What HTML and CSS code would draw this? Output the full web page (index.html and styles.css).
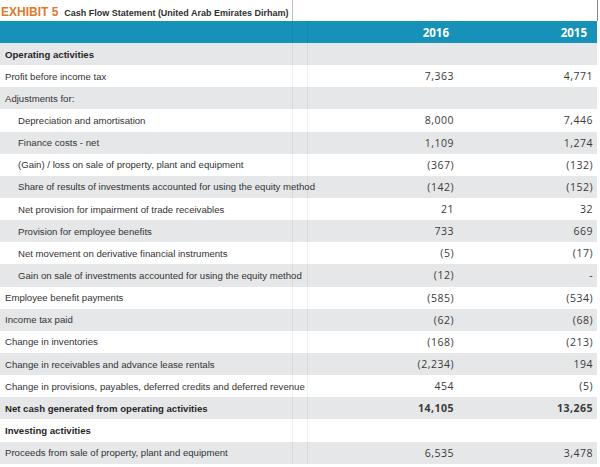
FILE: index.html
```html
<!DOCTYPE html>
<html>
<head>
<meta charset="utf-8">
<link rel="stylesheet" href="styles.css">
</head>
<body>
<table class="cf">
  <colgroup>
    <col class="c-label"><col class="c-gap"><col class="c-y1"><col class="c-y2">
  </colgroup>
  <thead>
    <tr class="title-row">
      <td class="title-cell"><span class="exhibit">EXHIBIT 5</span><span class="title">Cash Flow Statement (United Arab Emirates Dirham)</span></td>
      <td class="title-rest" colspan="3"></td>
    </tr>
    <tr class="head-row">
      <th class="lbl"></th><th class="gap"></th><th class="yr">2016</th><th class="yr">2015</th>
    </tr>
  </thead>
  <tbody>
    <tr class="alt bold"><td class="lbl">Operating activities</td><td class="gap"></td><td class="num"></td><td class="num"></td></tr>
    <tr><td class="lbl">Profit before income tax</td><td class="gap"></td><td class="num">7,363</td><td class="num">4,771</td></tr>
    <tr class="alt"><td class="lbl">Adjustments for:</td><td class="gap"></td><td class="num"></td><td class="num"></td></tr>
    <tr><td class="lbl ind">Depreciation and amortisation</td><td class="gap"></td><td class="num">8,000</td><td class="num">7,446</td></tr>
    <tr class="alt"><td class="lbl ind">Finance costs - net</td><td class="gap"></td><td class="num">1,109</td><td class="num">1,274</td></tr>
    <tr><td class="lbl ind">(Gain) / loss on sale of property, plant and equipment</td><td class="gap"></td><td class="num">(367)</td><td class="num">(132)</td></tr>
    <tr class="alt"><td class="lbl ind">Share of results of investments accounted for using the equity method</td><td class="gap"></td><td class="num">(142)</td><td class="num">(152)</td></tr>
    <tr><td class="lbl ind">Net provision for impairment of trade receivables</td><td class="gap"></td><td class="num">21</td><td class="num">32</td></tr>
    <tr class="alt"><td class="lbl ind">Provision for employee benefits</td><td class="gap"></td><td class="num">733</td><td class="num">669</td></tr>
    <tr><td class="lbl ind">Net movement on derivative financial instruments</td><td class="gap"></td><td class="num">(5)</td><td class="num">(17)</td></tr>
    <tr class="alt"><td class="lbl ind">Gain on sale of investments accounted for using the equity method</td><td class="gap"></td><td class="num">(12)</td><td class="num">-</td></tr>
    <tr><td class="lbl">Employee benefit payments</td><td class="gap"></td><td class="num">(585)</td><td class="num">(534)</td></tr>
    <tr class="alt"><td class="lbl">Income tax paid</td><td class="gap"></td><td class="num">(62)</td><td class="num">(68)</td></tr>
    <tr><td class="lbl">Change in inventories</td><td class="gap"></td><td class="num">(168)</td><td class="num">(213)</td></tr>
    <tr class="alt"><td class="lbl">Change in receivables and advance lease rentals</td><td class="gap"></td><td class="num">(2,234)</td><td class="num">194</td></tr>
    <tr><td class="lbl">Change in provisions, payables, deferred credits and deferred revenue</td><td class="gap"></td><td class="num">454</td><td class="num">(5)</td></tr>
    <tr class="alt bold"><td class="lbl">Net cash generated from operating activities</td><td class="gap"></td><td class="num">14,105</td><td class="num">13,265</td></tr>
    <tr class="bold"><td class="lbl">Investing activities</td><td class="gap"></td><td class="num"></td><td class="num"></td></tr>
    <tr class="alt"><td class="lbl">Proceeds from sale of property, plant and equipment</td><td class="gap"></td><td class="num">6,535</td><td class="num">3,478</td></tr>
  </tbody>
</table>
</body>
</html>
```

FILE: styles.css
```css
html, body {
  margin: 0;
  padding: 0;
  background: #ffffff;
}

.cf {
  border-collapse: collapse;
  table-layout: fixed;
  width: 597px;
  font-family: "Liberation Sans", Arial, sans-serif;
  color: #333333;
}

.c-label { width: 292px; }
.c-gap { width: 15px; }
.c-y1 { width: 150px; }
.c-y2 { width: 140px; }

.cf td, .cf th {
  padding: 0;
  white-space: nowrap;
  overflow: visible;
}

.title-row td {
  height: 21px;
  vertical-align: middle;
}

.title-cell {
  border-right: 1px solid #bfbfbf;
  padding-left: 1px !important;
}

.title-rest {
  border-right: 1px solid #8a8a8a;
}

.exhibit {
  font-weight: bold;
  font-size: 12px;
  color: #e0782d;
  margin-right: 6px;
}

.title {
  font-weight: bold;
  font-size: 9px;
  color: #2f2f2f;
}

.head-row th {
  height: 22px;
  background: #1691b7;
  color: #ffffff;
  font-family: "Open Sans", sans-serif;
  font-weight: bold;
  font-size: 11.5px;
}

.head-row th.yr {
  text-align: right;
  color: #ffffff;
}

.head-row th.yr:nth-child(3) { padding-right: 8px; }
.head-row th.yr:nth-child(4) { padding-right: 10px; }

.cf tbody td {
  height: 22.15px;
  vertical-align: middle;
  font-size: 9.6px;
}

.cf tbody tr.alt td {
  background: #e6e7e8;
}

.lbl {
  text-align: left;
  padding-left: 5px !important;
  border-right: 1px solid rgba(0, 0, 0, 0.06);
}

.lbl.ind {
  padding-left: 18px !important;
}

.gap {
  border-right: 1px solid rgba(0, 0, 0, 0.06);
}

.cf .num {
  text-align: right;
  font-family: "Open Sans", sans-serif;
  font-size: 10.5px;
  letter-spacing: 0.5px;
  color: #3a3a3a;
}

.cf tbody td.num:nth-child(3) { padding-right: 3px; }
.cf tbody td.num:nth-child(4) { padding-right: 4px; }

.bold td {
  font-weight: bold;
  color: #262626;
}
```
